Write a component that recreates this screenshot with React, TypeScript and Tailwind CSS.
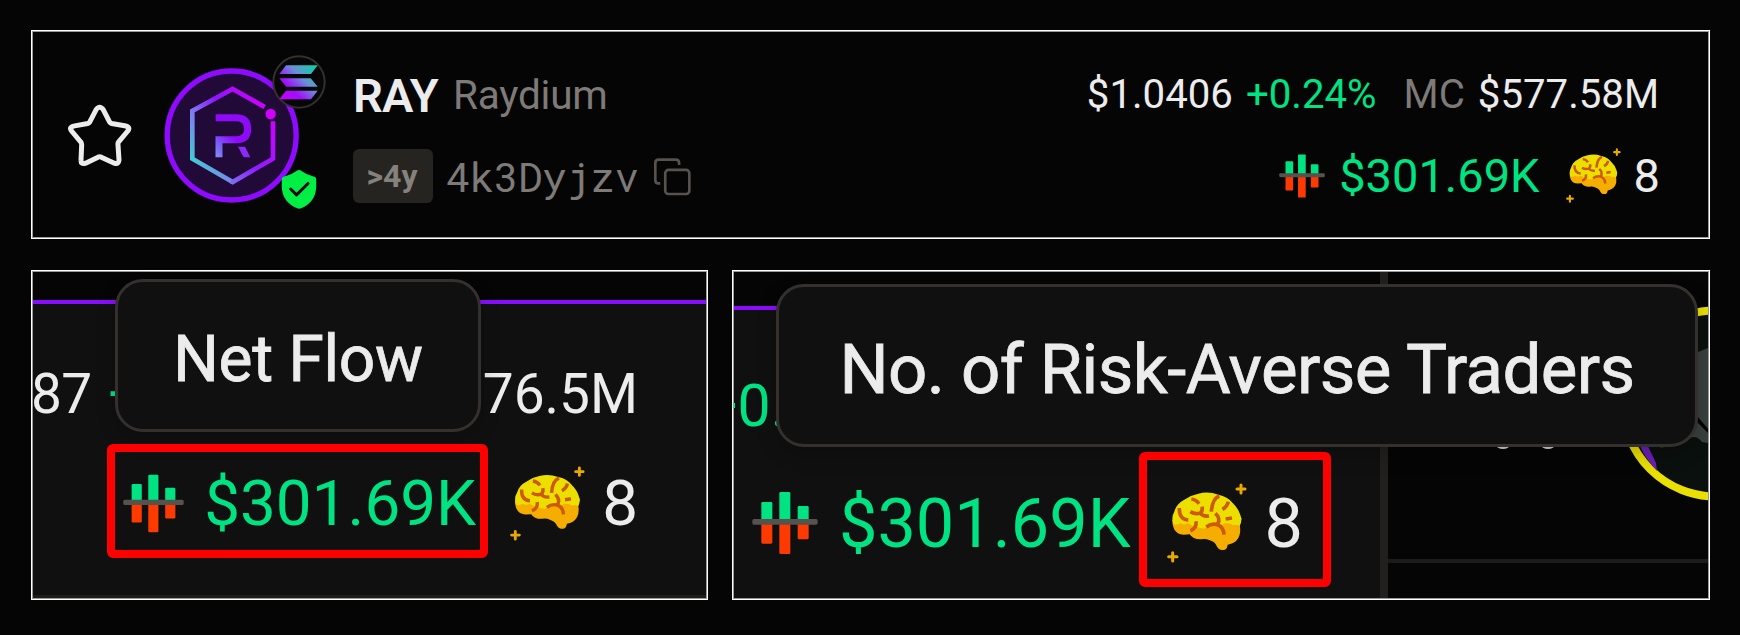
import React from "react";

function Star() {
  return (
    <svg viewBox="143 255 192 188" className="h-[63px] w-[64px] shrink-0" fill="none">
      <path
        d="M227 272Q238 257 249 272L268 309Q270 312 274 313L313 320Q333 324 321 337L295 368Q292 372 293 377L296 423Q295 437 282 432L243 414Q238 412 233 414L196 432Q181 437 182 423L184 377Q184 372 181 368L155 337Q143 324 163 320L202 313Q206 312 208 309Z"
        stroke="#ececec"
        strokeWidth="15"
        strokeLinejoin="round"
      />
    </svg>
  );
}

function RaydiumLogo() {
  return (
    <svg viewBox="434 144 403 405" className="h-[135px] w-[135px]" fill="none">
      <defs>
        <linearGradient id="hex" gradientUnits="userSpaceOnUse" x1="750" y1="270" x2="510" y2="420">
          <stop offset="0" stopColor="#d000ff" />
          <stop offset="0.42" stopColor="#8f14ff" />
          <stop offset="0.72" stopColor="#7c80f0" />
          <stop offset="1" stopColor="#3fd0d0" />
        </linearGradient>
        <linearGradient id="hexRight" gradientUnits="userSpaceOnUse" x1="765" y1="300" x2="600" y2="480">
          <stop offset="0" stopColor="#cf00ff" />
          <stop offset="0.6" stopColor="#8c1eff" />
          <stop offset="1" stopColor="#7c80f0" />
        </linearGradient>
        <linearGradient id="letter" gradientUnits="userSpaceOnUse" x1="690" y1="290" x2="585" y2="410">
          <stop offset="0" stopColor="#8a0cf5" />
          <stop offset="0.5" stopColor="#9208ff" />
          <stop offset="0.75" stopColor="#7a58f5" />
          <stop offset="1" stopColor="#7d90f5" />
        </linearGradient>
      </defs>
      <circle cx="636" cy="346.500" r="193.500" fill="#210a37" stroke="#8f0bff" strokeWidth="16" />
      <path d="M735 261L639 207L518 273V416L639 486" stroke="url(#hex)" strokeWidth="14" />
      <path d="M633 483L639 486L760 416V304" stroke="url(#hexRight)" strokeWidth="14" />
      <circle cx="753" cy="282" r="15.500" fill="#d400ff" />
      <path d="M588 293H650Q684 293 684 326Q684 359 650 359H598V412" stroke="url(#letter)" strokeWidth="21" />
      <path d="M655 380H676L692 412H672Z" fill="#8d27fa" />
    </svg>
  );
}

function SolanaBadge() {
  return (
    <svg viewBox="758 104 160 162" className="absolute -top-[13px] left-[108px] h-[54px] w-[54px]">
      <defs>
        <linearGradient id="sol" gradientUnits="userSpaceOnUse" x1="785" y1="235" x2="885" y2="135">
          <stop offset="0" stopColor="#c400ff" />
          <stop offset="0.3" stopColor="#a30cff" />
          <stop offset="0.62" stopColor="#6a8fd8" />
          <stop offset="1" stopColor="#08d3a5" />
        </linearGradient>
      </defs>
      <circle cx="838" cy="185" r="77" fill="#070707" stroke="#33302e" strokeWidth="6" />
      <path
        fill="url(#sol)"
        d="M799 135H894L874 161H779ZM779 174H873L894 199H800ZM799 211H894L874 237H779Z"
      />
    </svg>
  );
}

function ShieldBadge() {
  return (
    <svg viewBox="783 449 107 119" className="absolute left-[117px] top-[102px] h-[39px] w-[36px]" fill="none">
      <path
        fill="#00ef45"
        d="M830 451Q837 447 843 451Q860 464 881 469Q889 470 889 478V500Q888 546 843 566Q837 569 831 566Q785 546 784 500V478Q784 470 792 469Q813 464 830 451Z"
      />
      <path d="M811 507L829 525L864 490" stroke="#070707" strokeWidth="9" strokeLinecap="round" strokeLinejoin="round" />
    </svg>
  );
}

function CopyIcon() {
  return (
    <svg viewBox="942 326 112 113" className="relative top-[1px] ml-[15px] h-[38px] w-[37px]" fill="none" stroke="#57524d" strokeWidth="8">
      <rect x="976" y="361" width="73" height="73" rx="10" />
      <path d="M961 402H955Q946 402 946 392V340Q946 330 956 330H1008Q1018 330 1018 340V346" />
    </svg>
  );
}

function FlowIcon({ className }: { className: string }) {
  return (
    <svg viewBox="81 180 198 198" className={className}>
      <g fill="#00e383">
        <rect x="109" y="216" width="33" height="60" rx="4" />
        <rect x="163" y="186" width="33" height="90" rx="4" />
        <rect x="218" y="228" width="33" height="48" rx="4" />
      </g>
      <g fill="#ff3a00">
        <rect x="109" y="277" width="33" height="64" rx="4" />
        <rect x="163" y="277" width="33" height="95" rx="4" />
        <rect x="218" y="277" width="33" height="51" rx="4" />
      </g>
      <rect x="82" y="267" width="196" height="17" rx="5" fill="#57524e" />
    </svg>
  );
}

function BrainIcon({ className }: { className: string }) {
  return (
    <svg viewBox="138 160 240 240" className={className} fill="none">
      <path
        fill="#f5ae00"
        d="M154 270C154 290 160 314 188 315Q198 314 206 314Q216 330 240 329Q254 326 266 332Q280 336 285 345Q292 362 305 361Q318 362 320 345Q342 342 352 325Q361 308 356 285L362 265Z"
      />
      <path
        fill="#ecdf00"
        d="M157 282Q150 262 160 246Q166 222 190 210Q210 196 232 192Q262 184 292 195Q320 200 335 220Q352 236 358 256Q365 272 356 289Q346 282 338 287Q328 280 312 281Q300 290 284 284Q262 286 250 297Q238 296 228 292Q212 290 202 280Q190 288 178 281Q166 288 157 282Z"
      />
      <g stroke="#cd5a00" strokeWidth="11">
        <path d="M175 235Q174 270 202 271" />
        <path d="M211 208Q226 210 234 222" />
        <path d="M208 246Q222 255 238 250Q246 244 243 231M238 250Q246 262 264 259" />
        <path d="M295 199Q274 206 271 246" />
        <path d="M322 216Q318 232 304 239" />
        <path d="M314 268L333 265" />
        <path d="M225 275Q228 296 208 303" />
        <path d="M283 251Q300 266 290 284M256 292Q272 280 290 285Q308 292 309 315" />
      </g>
      <path stroke="#e9a900" strokeWidth="9" strokeLinecap="round" d="M360 166V190M348 178H372M155 369V394M143 381H168" />
    </svg>
  );
}

const frame = "overflow-hidden border border-white shadow-[inset_0_0_0_1px_#9a9a9a]";
const tooltip =
  "absolute flex items-center justify-center rounded-[28px] border-[3px] border-[#33302e] bg-[#101010] font-normal leading-none text-[#ececec] [-webkit-text-stroke:0.8px_#ececec] shadow-[0_8px_20px_rgba(0,0,0,0.2)]";

export default function App() {
  return (
    <div className="flex h-[635px] w-[1740px] flex-col gap-[31px] overflow-hidden whitespace-nowrap bg-[#050505] pl-[31px] pt-[30px] font-[Roboto,sans-serif] leading-none text-[#ececec]">
      <section className={`${frame} flex h-[209px] w-[1679px] items-start pl-[36px] pr-[50px] pt-[37px]`}>
        <div className="flex h-[135px] items-center">
          <Star />
        </div>
        <div className="relative ml-[32px] h-[135px] w-[135px] shrink-0">
          <RaydiumLogo />
          <SolanaBadge />
          <ShieldBadge />
        </div>
        <div className="ml-[54px] flex flex-col gap-[27px]">
          <div className="flex h-[54px] items-center">
            <span className="text-[47px] font-semibold tracking-[-0.8px]">RAY</span>
            <span className="ml-[15px] text-[40.5px] tracking-[-0.2px] text-[#7d7a77]">Raydium</span>
          </div>
          <div className="flex h-[54px] items-center">
            <span className="flex h-[54px] w-[80px] items-center justify-center rounded-md bg-[#262420] pr-[2px] text-[32px] font-bold text-[#85817d]">
              &gt;4y
            </span>
            <span className="ml-[13px] pt-[2px] font-['Roboto_Mono','Noto_Sans_Mono','Liberation_Mono',monospace] text-[40.5px] tracking-[-0.2px] text-[#7d7a77]">
              4k3Dyjzv
            </span>
            <CopyIcon />
          </div>
        </div>
        <div className="ml-auto flex flex-col items-end gap-[27px] text-[40.2px]">
          <div className="flex h-[54px] items-center pt-px">
            <span>$1.0406</span>
            <span className="ml-[13px] text-[#00e383]">+0.24%</span>
            <span className="ml-[27px] text-[#7d7a77]">MC</span>
            <span className="ml-[13px]">$577.58M</span>
          </div>
          <div className="-mr-px flex h-[54px] items-center pb-px text-[47px]">
            <FlowIcon className="h-[46px] w-[46px]" />
            <span className="ml-[14px] text-[#00e383]">$301.69K</span>
            <BrainIcon className="ml-[26px] h-[55px] w-[55px]" />
            <span className="ml-[13px]">8</span>
          </div>
        </div>
      </section>

      <div className="flex gap-[24px]">
        <section className={`${frame} relative flex h-[330px] w-[677px] flex-col`}>
          <div className="h-[29px] shrink-0" />
          <div className="mx-px mb-px flex flex-1 flex-col border-b-[3px] border-t-4 border-b-[#1e1d1a] border-t-[#8a0cff] bg-[#101010] pr-[68px]">
            <div className="mt-[62px] flex h-[56px] items-center text-[55px]">
              <span className="-ml-[2px] tracking-[-0.7px]">87</span>
              <span className="ml-[17px] text-[#00e383]">+</span>
              <span className="ml-auto">$576.5M</span>
            </div>
            <div className="mt-[43px] flex h-[76px] items-center justify-end text-[63.8px]">
              <FlowIcon className="h-[61px] w-[61px]" />
              <span className="ml-[20px] pt-[2px] text-[#00e383]">$301.69K</span>
              <BrainIcon className="ml-[34px] h-[75px] w-[75px]" />
              <span className="ml-[17px] pt-[2px]">8</span>
            </div>
          </div>
          <div className={`${tooltip} left-[83px] top-[8px] h-[153px] w-[366px] pt-[8px] text-[64px] tracking-[-0.3px]`}>
            Net Flow
          </div>
          <div className="absolute left-[75px] top-[173px] h-[114px] w-[381px] rounded-md border-8 border-[#ff0000]" />
        </section>

        <section className={`${frame} relative flex h-[330px] w-[978px] p-px`}>
          <div className="flex w-[646px] shrink-0 flex-col">
            <div className="h-[34px] shrink-0" />
            <div className="flex flex-1 flex-col border-t-4 border-[#8a0cff] bg-[#101010]">
              <div className="mt-[65px] flex h-[60px] items-center text-[59px] text-[#00e383]">
                <span className="-ml-[30px]">+0.</span>
              </div>
              <div className="mt-[48px] flex h-[80px] items-center pl-[18px] text-[68.4px]">
                <FlowIcon className="h-[66px] w-[66px]" />
                <span className="ml-[21px] pt-[2px] text-[#00e383]">$301.69K</span>
                <BrainIcon className="ml-[36px] h-[80px] w-[80px]" />
                <span className="ml-[18px] pt-[2px]">8</span>
              </div>
            </div>
          </div>
          <div className="w-[8px] shrink-0 bg-[#21201e]" />
          <div className="relative flex flex-1 flex-col overflow-hidden">
            <div className="h-[291px] border-b-4 border-[#1c1b19]" />
            <svg viewBox="1388 272 320 326" className="absolute left-0 top-0 h-[326px] w-[320px]">
              <circle cx="1716" cy="403.500" r="93" fill="#0a100d" stroke="#e9df00" strokeWidth="8" />
              <path d="M1639 444Q1646 460 1657 471L1656 463L1646 442Z" fill="#6a1fb8" />
              <path d="M1698 352L1708 348V443L1702 442Q1694 432 1686 442L1660 448L1690 420Z" fill="#39413f" />
              <path d="M1697 416L1709 430V434L1697 422Z" fill="#050505" />
              <ellipse cx="1503" cy="445" rx="7" ry="4" fill="#d0d0d0" />
              <ellipse cx="1548" cy="445" rx="7" ry="4" fill="#d0d0d0" />
            </svg>
          </div>
          <div className={`${tooltip} left-[43px] top-[13px] h-[163px] w-[922px] pt-[7px] text-[69px] tracking-[-0.58px]`}>
            No. of Risk-Averse Traders
          </div>
          <div className="absolute left-[406px] top-[181px] h-[135px] w-[192px] rounded-md border-8 border-[#ff0000]" />
        </section>
      </div>
    </div>
  );
}
